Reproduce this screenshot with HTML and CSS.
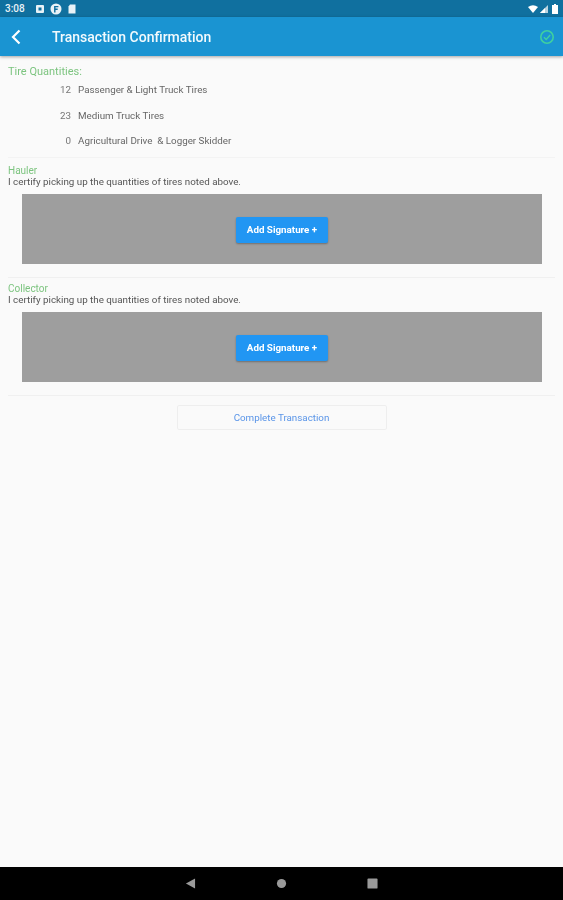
FILE: index.html
```html
<!DOCTYPE html>
<html lang="en">
<head>
    <meta charset="UTF-8">
    <meta name="viewport" content="width=device-width, initial-scale=1.0">
    <title>Transaction Confirmation</title>
    <link rel="stylesheet" href="styles.css">
</head>
<body>
    <div class="screen">
        <div class="status-bar">
            <div class="status-left">
                <span class="clock">3:08</span>
                <svg class="status-icon" viewBox="0 0 10 10"><rect x="1" y="1" width="8" height="8" rx="1" fill="#e8f2f7"/><rect x="3.5" y="3.5" width="3" height="3" fill="#10709f"/></svg>
                <svg class="status-icon-large" viewBox="0 0 10 10"><circle cx="5" cy="5" r="4.6" fill="#e8f2f7"/><path d="M4 8V3h3M4 5.2h2.4" stroke="#10709f" stroke-width="1.2" fill="none"/></svg>
                <svg class="status-icon" viewBox="0 0 10 10"><path d="M3 .5h5.500v9h-7V2.500z" fill="#e8f2f7"/></svg>
            </div>
            <div class="status-right">
                <svg class="status-icon" viewBox="0 0 10 10"><path d="M0 3q5-3.500 10 0L5 9z" fill="#fff"/></svg>
                <svg class="status-icon" viewBox="0 0 10 10"><path d="M9 1v8H1z" fill="#b9d3e0"/><path d="M6 4v5H1z" fill="#fff"/></svg>
                <svg class="battery" viewBox="0 0 6 10"><path d="M2 0h2v1h2v9H0V1h2z" fill="#fff"/></svg>
            </div>
        </div>
        <header class="app-bar">
            <svg class="back" viewBox="0 0 12 18"><path d="M9.500 2.500 3 9l6.500 6.500" fill="none" stroke="#fff" stroke-width="2.200"/></svg>
            <h1>Transaction Confirmation</h1>
            <svg class="done" viewBox="0 0 16 16"><circle cx="8" cy="8" r="6.200" fill="none" stroke="#3fd0a0" stroke-width="1.600"/><path d="M5 8.200l2.200 2.200L11.200 6" fill="none" stroke="#3fd0a0" stroke-width="1.400"/></svg>
        </header>
        <main class="content">
            <section class="quantities">
                <div class="label label-large">Tire Quantities:</div>
                <div class="tire-row"><span class="qty">12</span><span>Passenger &amp; Light Truck Tires</span></div>
                <div class="tire-row"><span class="qty">23</span><span>Medium Truck Tires</span></div>
                <div class="tire-row"><span class="qty">0</span><span>Agricultural Drive &nbsp;&amp; Logger Skidder</span></div>
            </section>
            <section class="sign-section">
                <div class="label">Hauler</div>
                <p>I certify picking up the quantities of tires noted above.</p>
                <div class="sign-box"><a class="add-sign">Add Signature +</a></div>
            </section>
            <section class="sign-section">
                <div class="label">Collector</div>
                <p>I certify picking up the quantities of tires noted above.</p>
                <div class="sign-box"><a class="add-sign">Add Signature +</a></div>
            </section>
            <div class="actions"><a class="complete">Complete Transaction</a></div>
        </main>
        <nav class="nav-bar">
            <svg class="nav-icon" viewBox="0 0 12 12"><path d="M11 .5v11L1 6z" fill="#9a9a9a"/></svg>
            <svg class="nav-icon" viewBox="0 0 12 12"><circle cx="6" cy="6" r="5" fill="#9a9a9a"/></svg>
            <svg class="nav-icon" viewBox="0 0 12 12"><rect x=".5" y=".5" width="11" height="11" rx="1" fill="#9a9a9a"/></svg>
        </nav>
    </div>
</body>
</html>
```
FILE: styles.css
```css
* {
    box-sizing: border-box;
}
body {
    margin: 0;
    font-family: Roboto, "Liberation Sans", sans-serif;
    background-color: #fafafa;
}
.screen {
    height: 900px;
    display: flex;
    flex-direction: column;
    filter: blur(0.5px);
}
.status-bar {
    height: 17px;
    background-color: #10709f;
    display: flex;
    justify-content: space-between;
    align-items: center;
    padding: 0 5px;
}
.status-left, .status-right {
    display: flex;
    align-items: center;
    gap: 5px;
}
.status-right {
    gap: 1px;
}
.clock {
    color: #e8f2f7;
    font-size: 10px;
    font-weight: 500;
    margin-right: 5px;
}
.status-icon {
    width: 10px;
    height: 10px;
}
.status-icon-large {
    width: 12px;
    height: 12px;
}
.battery {
    width: 6px;
    height: 10px;
    margin-left: 2px;
}
.app-bar {
    height: 39px;
    background-color: #1a94d2;
    display: flex;
    align-items: center;
    padding: 0 8px 0 10px;
    box-shadow: 0 1px 3px rgba(0, 0, 0, 0.35);
}
.back {
    width: 12px;
    height: 18px;
}
.app-bar h1 {
    flex: 1;
    margin: 0 0 0 30px;
    color: #f2fafd;
    font-size: 14px;
    font-weight: 500;
}
.done {
    width: 16px;
    height: 16px;
}
.content {
    flex: 1;
    padding: 0 8px;
}
.label {
    color: #7cc47f;
    font-size: 10px;
    line-height: 11px;
}
.label-large {
    font-size: 11px;
}
.quantities {
    padding-top: 10px;
    height: 102px;
    margin-bottom: 2px;
    border-bottom: 1px solid #f3f3f3;
}
.tire-row {
    display: flex;
    gap: 7px;
    height: 25.500px;
    align-items: center;
    color: #666;
    font-size: 9.800px;
}
.qty {
    width: 63px;
    text-align: right;
    color: #777;
}
.sign-section {
    padding-top: 5px;
    height: 118px;
    border-bottom: 1px solid #f0f0f0;
}
.sign-section p {
    margin: 0;
    color: #555;
    font-size: 9.800px;
    line-height: 11px;
}
.sign-box {
    height: 70px;
    margin: 7px 13px 0 14px;
    background-color: #9e9e9e;
    padding-top: 1px;
    display: flex;
    align-items: center;
    justify-content: center;
}
.add-sign {
    width: 92px;
    height: 26px;
    background-color: #2196f3;
    color: #fff;
    font-size: 9.800px;
    font-weight: 700;
    border-radius: 2px;
    box-shadow: 0 1px 2px rgba(0, 0, 0, 0.3);
    display: flex;
    align-items: center;
    justify-content: center;
}
.actions {
    display: flex;
    justify-content: center;
    padding-top: 9px;
}
.complete {
    width: 210px;
    height: 25px;
    border: 1px solid #eeeeee;
    border-radius: 2px;
    color: #5a95e8;
    font-size: 9.800px;
    display: flex;
    align-items: center;
    justify-content: center;
}
.nav-bar {
    height: 33px;
    background-color: #000;
    display: flex;
    justify-content: center;
    align-items: center;
    gap: 80px;
}
.nav-icon {
    width: 11px;
    height: 11px;
}
```
